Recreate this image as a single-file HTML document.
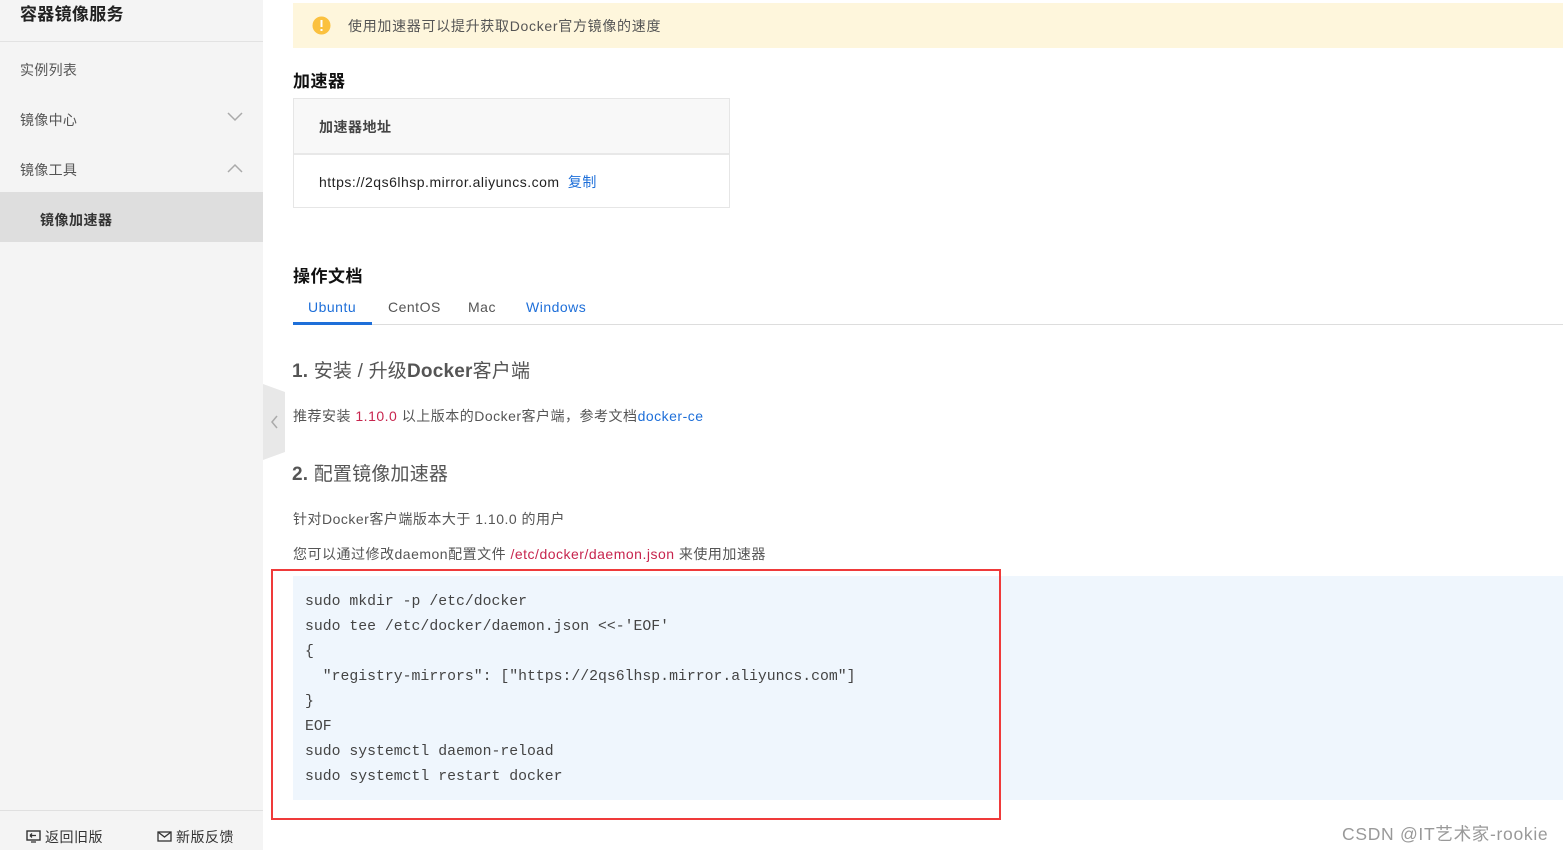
<!DOCTYPE html>
<html><head><meta charset="utf-8"><style>
*{margin:0;padding:0;box-sizing:border-box}
body{width:1563px;height:850px;overflow:hidden;background:#fff;font-family:"Liberation Sans","Noto Sans CJK SC",sans-serif;color:#333;position:relative;font-size:14px;letter-spacing:0.5px}
.abs{position:absolute;white-space:nowrap}
.side{position:absolute;left:0;top:0;width:263px;height:850px;background:#f4f4f4}
</style></head><body>
<div class="side">
  <div class="abs" style="left:20px;top:0px;font-size:17px;font-weight:bold;color:#222;letter-spacing:0.3px">容器镜像服务</div>
  <div style="position:absolute;left:0;top:41px;width:263px;height:1px;background:#e2e2e2"></div>
  <div class="abs" style="left:20px;top:60px;color:#555;letter-spacing:0.3px">实例列表</div>
  <div class="abs" style="left:20px;top:110px;color:#555;letter-spacing:0.3px">镜像中心</div>
  <svg class="abs" style="left:227px;top:112px" width="16" height="10"><path d="M1 1 L8 8 L15 1" stroke="#aaa" stroke-width="1.5" fill="none"/></svg>
  <div class="abs" style="left:20px;top:160px;color:#555;letter-spacing:0.3px">镜像工具</div>
  <svg class="abs" style="left:227px;top:163px" width="16" height="10"><path d="M1 9 L8 2 L15 9" stroke="#aaa" stroke-width="1.5" fill="none"/></svg>
  <div style="position:absolute;left:0;top:192px;width:263px;height:50px;background:#dedede"></div>
  <div class="abs" style="left:40px;top:210px;font-weight:bold;color:#333">镜像加速器</div>
  <div style="position:absolute;left:0;top:810px;width:263px;height:1px;background:#e0e0e0"></div>
  <svg class="abs" style="left:26px;top:830px" width="15" height="13"><rect x="1" y="1" width="13" height="9" stroke="#333" stroke-width="1.4" fill="none"/><path d="M4 5.5h6M4 5.5l2-2M4 5.5l2 2M5 12h5" stroke="#333" stroke-width="1.3" fill="none"/></svg>
  <div class="abs" style="left:45px;top:827px;color:#333">返回旧版</div>
  <svg class="abs" style="left:157px;top:831px" width="15" height="11"><rect x="1" y="1" width="13" height="9" stroke="#333" stroke-width="1.3" fill="none"/><path d="M1 1l6.5 5 6.5-5" stroke="#333" stroke-width="1.3" fill="none"/></svg>
  <div class="abs" style="left:176px;top:827px;color:#333">新版反馈</div>
</div>
<svg class="abs" style="left:263px;top:384px" width="22" height="76"><path d="M0 0 L22 8 L22 68 L0 76Z" fill="#e8e8e8"/><path d="M14 32 L9 38 L14 44" stroke="#aaa" stroke-width="1.5" fill="none"/></svg>

<div style="position:absolute;left:293px;top:3px;width:1270px;height:45px;background:#fef6dc"></div>
<svg class="abs" style="left:312px;top:16px" width="19" height="19"><circle cx="9.5" cy="9.5" r="9" fill="#fbc13f"/><rect x="8.5" y="4" width="2" height="7" fill="#fff"/><rect x="8.5" y="13" width="2" height="2" fill="#fff"/></svg>
<div class="abs" style="left:348px;top:16px;color:#555;letter-spacing:0.7px">使用加速器可以提升获取Docker官方镜像的速度</div>

<div class="abs" style="left:293px;top:67px;font-size:17px;font-weight:bold;color:#111">加速器</div>
<div style="position:absolute;left:293px;top:98px;width:437px;height:110px;border:1px solid #e6e6e6">
  <div style="height:56px;background:#f8f8f8;border-bottom:2px solid #e8e8e8"></div>
</div>
<div class="abs" style="left:319px;top:117px;color:#444;font-weight:bold">加速器地址</div>
<div class="abs" style="left:319px;top:172px;color:#222">https://2qs6lhsp.mirror.aliyuncs.com <span style="color:#1e6fd9;margin-left:4px">复制</span></div>

<div class="abs" style="left:293px;top:262px;font-size:17px;font-weight:bold;color:#111">操作文档</div>
<div style="position:absolute;left:293px;top:324px;width:1270px;height:1px;background:#ddd"></div>
<div style="position:absolute;left:293px;top:322px;width:79px;height:3px;background:#1e6fd9"></div>
<div class="abs" style="left:308px;top:299px;color:#1e6fd9">Ubuntu</div>
<div class="abs" style="left:388px;top:299px;color:#555">CentOS</div>
<div class="abs" style="left:468px;top:299px;color:#555">Mac</div>
<div class="abs" style="left:526px;top:299px;color:#1e6fd9">Windows</div>

<div class="abs" style="left:292px;top:356px;font-size:19px;color:#555;letter-spacing:0.2px"><b>1.</b> 安装 / 升级<b>Docker</b>客户端</div>
<div class="abs" style="left:293px;top:406px;color:#555">推荐安装 <span style="color:#c7254e">1.10.0</span> 以上版本的Docker客户端，参考文档<span style="color:#1e6fd9">docker-ce</span></div>
<div class="abs" style="left:292px;top:459px;font-size:19px;color:#555;letter-spacing:0.2px"><b>2.</b> 配置镜像加速器</div>
<div class="abs" style="left:293px;top:509px;color:#555">针对Docker客户端版本大于 1.10.0 的用户</div>
<div class="abs" style="left:293px;top:544px;color:#555">您可以通过修改daemon配置文件 <span style="color:#c7254e">/etc/docker/daemon.json</span> 来使用加速器</div>

<div style="position:absolute;left:293px;top:576px;width:1270px;height:224px;background:#eff6fd"></div>
<pre style="position:absolute;left:305px;top:590px;white-space:pre;letter-spacing:0;font-family:'Liberation Mono',monospace;font-size:14.8px;line-height:25px;color:#444">sudo mkdir -p /etc/docker
sudo tee /etc/docker/daemon.json &lt;&lt;-'EOF'
{
  "registry-mirrors": ["https://2qs6lhsp.mirror.aliyuncs.com"]
}
EOF
sudo systemctl daemon-reload
sudo systemctl restart docker</pre>
<div style="position:absolute;left:271px;top:569px;width:730px;height:251px;border:2px solid #ef3a3a"></div>
<div class="abs" style="left:1342px;top:821px;font-size:17.5px;color:#999;letter-spacing:0.7px">CSDN @IT艺术家-rookie</div>
</body></html>
